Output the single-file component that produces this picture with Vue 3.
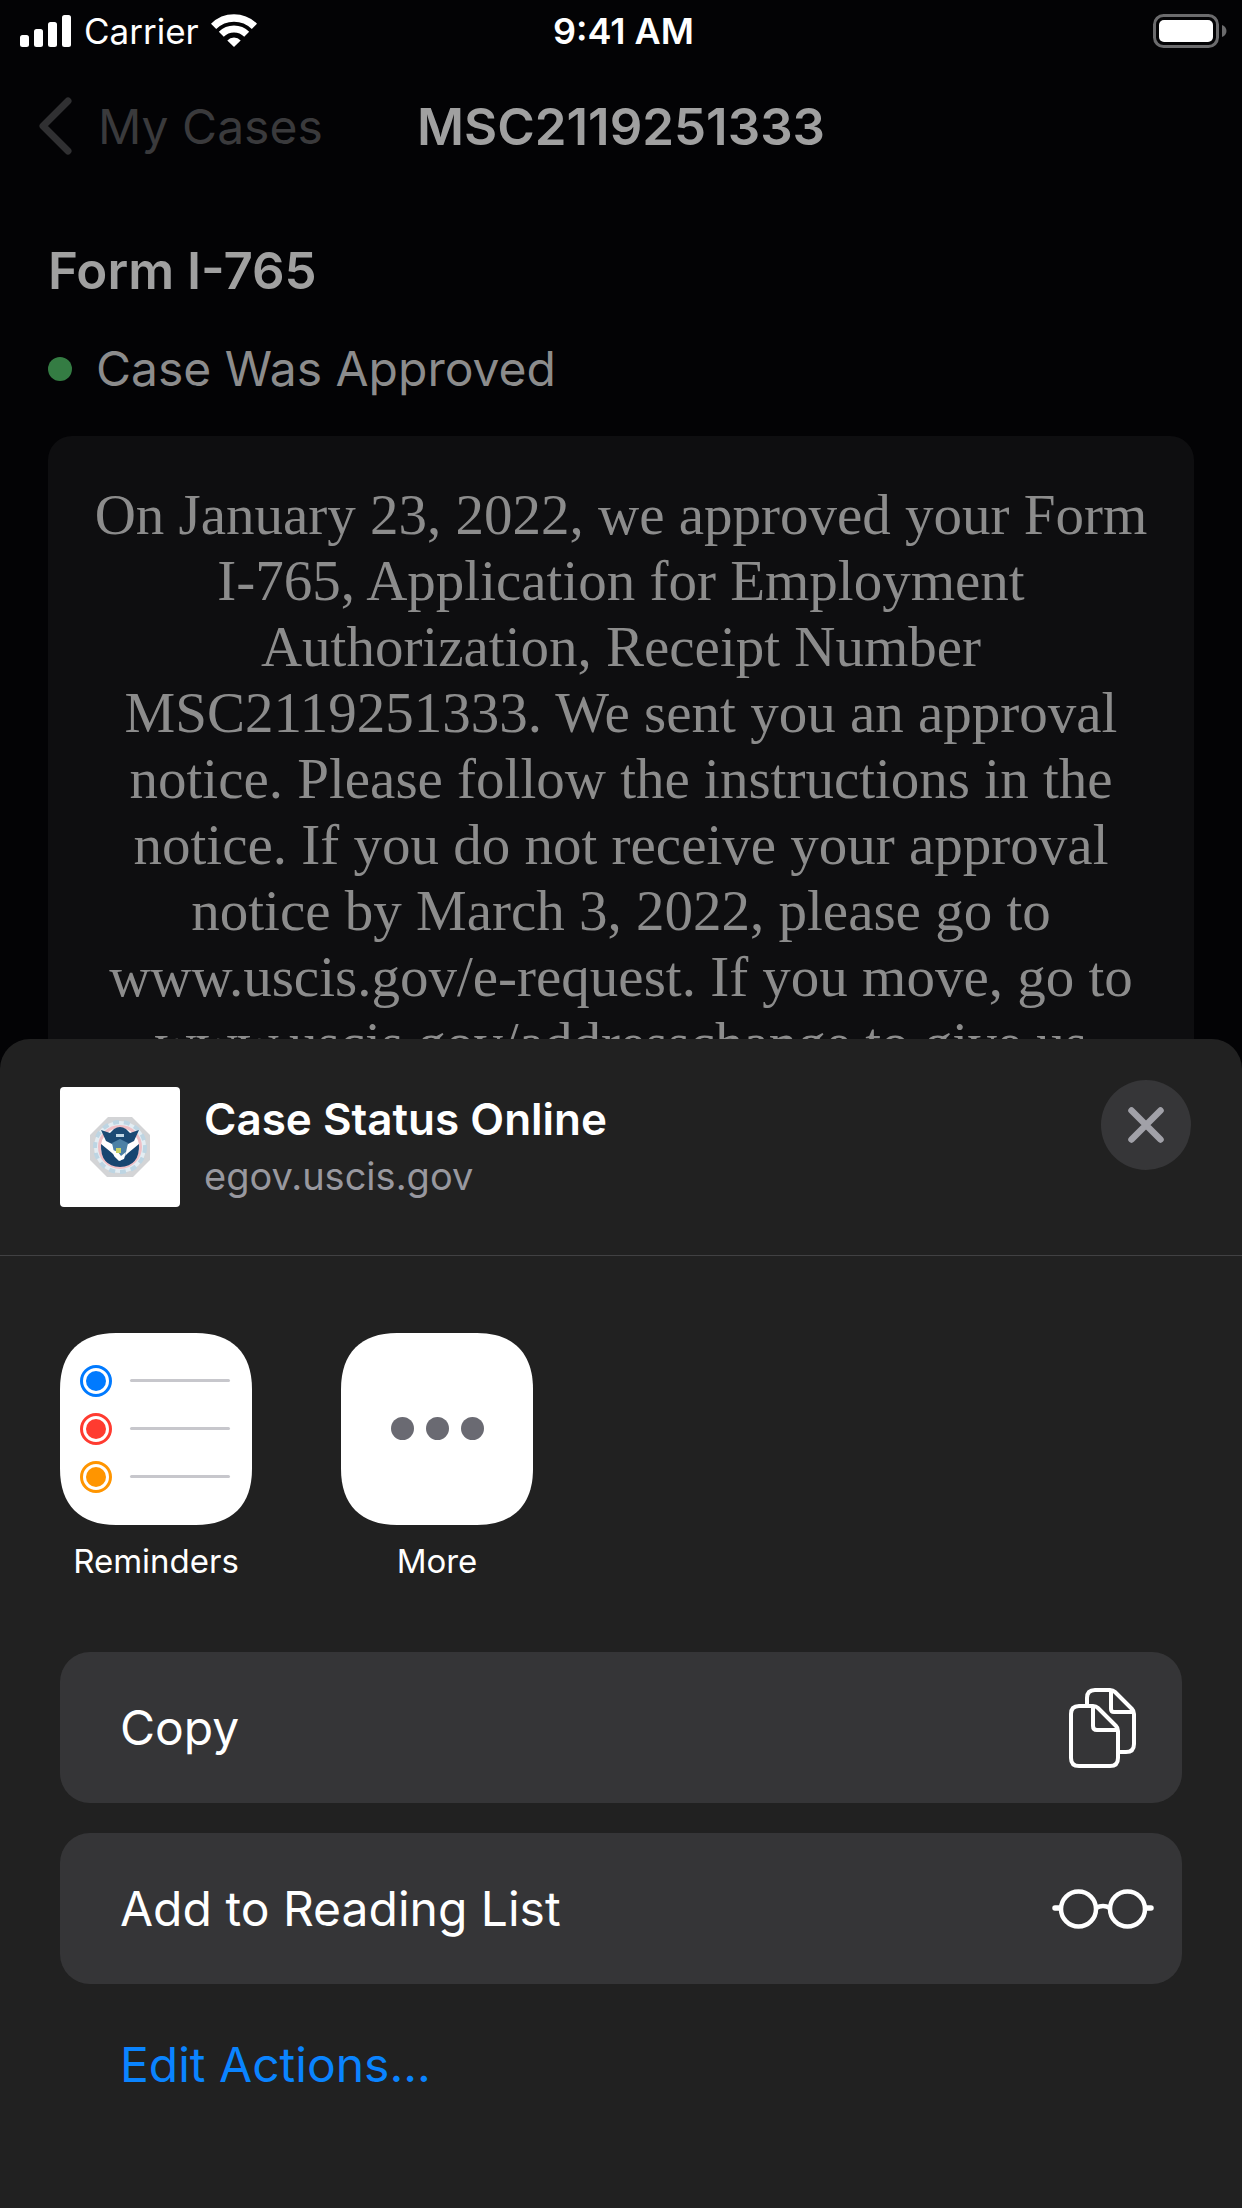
<script setup>
const noticeLines = [
  'On January 23, 2022, we approved your Form',
  'I-765, Application for Employment',
  'Authorization, Receipt Number',
  'MSC2119251333. We sent you an approval',
  'notice. Please follow the instructions in the',
  'notice. If you do not receive your approval',
  'notice by March 3, 2022, please go to',
  'www.uscis.gov/e-request. If you move, go to',
  'www.uscis.gov/addresschange to give us',
]

const reminders = [
  { color: '#007aff', y: 48 },
  { color: '#ff3b30', y: 96 },
  { color: '#ff9500', y: 144 },
]
</script>

<template>
  <div class="app">
    <div class="screen">
      <div class="status-bar">
        <div class="status-left">
          <svg class="signal" width="52" height="34" viewBox="0 0 52 34" fill="#fff" aria-hidden="true">
            <rect x="0" y="21" width="9" height="12" rx="2.5" />
            <rect x="14" y="15" width="9" height="18" rx="2.5" />
            <rect x="28" y="8" width="9" height="25" rx="2.5" />
            <rect x="42" y="1" width="9" height="32" rx="2.5" />
          </svg>
          <span>Carrier</span>
          <svg width="46" height="34" viewBox="0 0 46 34" fill="none" stroke="#fff" aria-hidden="true">
            <path d="M2.6 12.4A29 29 0 0 1 43.4 12.4" stroke-width="7.4" />
            <path d="M10.3 20.2A18 18 0 0 1 35.7 20.2" stroke-width="7" />
            <path d="M16.3 26.4A9.4 9.4 0 0 1 29.7 26.4L23 33Z" fill="#fff" stroke="none" />
          </svg>
        </div>
        <span class="clock">9:41 AM</span>
        <div class="status-right">
          <svg width="74" height="34" viewBox="0 0 74 34" aria-hidden="true">
            <rect x="1.5" y="1.5" width="63" height="31" rx="9" fill="none" stroke="#6b6b6d" stroke-width="3" />
            <rect x="6" y="6" width="54" height="22" rx="5" fill="#fff" />
            <path d="M69 11c3 1 4.500 3.500 4.500 6s-1.500 5-4.500 6z" fill="#6b6b6d" />
          </svg>
        </div>
      </div>

      <header class="nav">
        <button class="back" type="button">
          <svg width="36" height="60" viewBox="0 0 36 60" fill="none" stroke="#303032" stroke-width="7" stroke-linecap="round" stroke-linejoin="round" aria-hidden="true">
            <path d="M29 5L4 30L29 55" />
          </svg>
          <span>My Cases</span>
        </button>
        <h1>MSC2119251333</h1>
      </header>

      <main class="case">
        <h2>Form I-765</h2>
        <p class="case-status"><span class="dot"></span>Case Was Approved</p>
        <p class="notice">
          <template v-for="line in noticeLines" :key="line">{{ line }}<br /></template>
        </p>
      </main>
    </div>

    <section class="sheet" aria-label="Share">
      <div class="sheet-header">
        <svg class="thumb" width="120" height="120" viewBox="0 0 120 120" aria-hidden="true">
          <rect width="120" height="120" rx="4" fill="#fff" />
          <path d="M48 30H72L90 48V73L73 90H47L30 73V48Z" fill="#d3d4d6" />
          <circle cx="60" cy="60" r="26" fill="#e3edf3" />
          <circle cx="60" cy="60" r="25" fill="none" stroke="#bdd5e3" stroke-width="4" stroke-dasharray="6 5" />
          <circle cx="60" cy="60" r="20.500" fill="#fff" stroke="#efc0c6" stroke-width="3" />
          <path d="M41 43L50 46L54 42Q60 38 66 42L70 46L79 43L74 54L66 58L60 63L54 58L46 54Z" fill="#1c4a74" />
          <path d="M41 57L52 66L60 74L68 66L79 57Q80 79 60 80Q40 79 41 57Z" fill="#174570" />
          <path d="M52 56L60 52L68 56L65 70L60 74L55 70Z" fill="#4d81a5" />
          <path d="M56 47H64V50H56Z" fill="#c3d8e6" />
          <path d="M53 63L58 65L61 69L66 65L64 72L59 74L54 69Z" fill="#fff" />
          <path d="M56 61H61V66H56Z" fill="#c9d268" />
        </svg>
        <div class="sheet-titles">
          <h2>Case Status Online</h2>
          <p>egov.uscis.gov</p>
        </div>
        <button class="close" type="button" aria-label="Close">
          <svg width="36" height="36" viewBox="0 0 36 36" stroke="#a1a1a8" stroke-width="6.500" stroke-linecap="round" aria-hidden="true">
            <path d="M3.500 3.500L32.500 32.500M32.500 3.500L3.500 32.500" />
          </svg>
        </button>
      </div>

      <div class="apps">
        <button class="app-item" type="button">
          <svg width="192" height="192" viewBox="0 0 192 192" aria-hidden="true">
            <path class="tile" d="M56 0H136C172 0 192 20 192 56V136C192 172 172 192 136 192H56C20 192 0 172 0 136V56C0 20 20 0 56 0Z" />
            <g v-for="r in reminders" :key="r.color">
              <circle cx="36" :cy="r.y" r="14.500" fill="none" :stroke="r.color" stroke-width="3" />
              <circle cx="36" :cy="r.y" r="10" :fill="r.color" />
              <rect x="70" :y="r.y - 2" width="100" height="3" rx="1.500" fill="#c7c7cc" />
            </g>
          </svg>
          <span>Reminders</span>
        </button>
        <button class="app-item" type="button">
          <svg width="192" height="192" viewBox="0 0 192 192" aria-hidden="true">
            <path class="tile" d="M56 0H136C172 0 192 20 192 56V136C192 172 172 192 136 192H56C20 192 0 172 0 136V56C0 20 20 0 56 0Z" />
            <g fill="#6a6a72">
              <circle cx="61.500" cy="95.500" r="11.500" />
              <circle cx="96.500" cy="95.500" r="11.500" />
              <circle cx="131.500" cy="95.500" r="11.500" />
            </g>
          </svg>
          <span>More</span>
        </button>
      </div>

      <div class="actions">
        <button class="action" type="button">
          <span>Copy</span>
          <svg width="102" height="82" viewBox="0 0 102 82" fill="none" stroke="#fff" stroke-width="4" stroke-linejoin="round" aria-hidden="true">
            <path d="M35 17V11Q35 3 43 3H58Q61 3 63 5L80 22Q82 24 82 27V57Q82 65 74 65H67" />
            <path d="M59 4V22Q59 25 62 25H81" />
            <path d="M27 19H41Q44 19 46 21L64 39Q66 41 66 44V71Q66 79 58 79H27Q19 79 19 71V27Q19 19 27 19Z" />
            <path d="M41 20V39Q41 43 45 43H65" />
          </svg>
        </button>
        <button class="action" type="button">
          <span>Add to Reading List</span>
          <svg width="102" height="42" viewBox="0 0 102 42" fill="none" stroke="#fff" aria-hidden="true">
            <circle cx="26.500" cy="21" r="17.500" stroke-width="4.500" />
            <circle cx="75.500" cy="21" r="17.500" stroke-width="4.500" />
            <path d="M44 20Q51 16 58 20" stroke-width="4.500" />
            <path d="M3 20H8M94 20H99" stroke-width="5.500" stroke-linecap="round" />
          </svg>
        </button>
        <button class="edit" type="button">Edit Actions...</button>
      </div>
    </section>
  </div>
</template>

<style>
body {
  margin: 0;
  background: #030305;
}
</style>

<style scoped>
.app {
  display: flex;
  flex-direction: column;
  height: 100vh;
  background: #030305;
  color: #fff;
  font-family: Inter, "Liberation Sans", sans-serif;
  font-size: 48px;
}

h1,
h2,
p {
  margin: 0;
  font-size: inherit;
  font-weight: inherit;
}

svg {
  display: block;
  flex: none;
}

button {
  padding: 0;
  border: 0;
  background: none;
  color: inherit;
  font: inherit;
  text-align: left;
}

.screen {
  flex: 1 1 0;
  min-height: 0;
  overflow: hidden;
}

.status-bar {
  display: grid;
  grid-template-columns: 1fr auto 1fr;
  align-items: center;
  height: 60px;
  padding: 0 15px 0 20px;
  font-size: 35px;
  line-height: 62px;
}

.status-left {
  display: flex;
  align-items: center;
  gap: 12px;
}

.clock {
  font-size: 36px;
  font-weight: 600;
}

.status-right {
  display: flex;
  justify-content: flex-end;
}

.nav {
  display: grid;
  grid-template-columns: 1fr auto 1fr;
  align-items: center;
  height: 132px;
  padding: 0 39px;
}

.nav h1 {
  color: #a0a0a0;
  font-size: 51px;
  font-weight: 600;
}

.back {
  display: flex;
  align-items: center;
  gap: 23px;
  color: #3a3a3c;
}

.case {
  padding: 48px 48px 0;
}

.case h2 {
  color: #a0a0a0;
  font-size: 51px;
  font-weight: 600;
  line-height: 62px;
}

.case-status {
  display: flex;
  align-items: center;
  gap: 24px;
  margin: 36px 0;
  color: #8c8c8c;
  line-height: 62px;
}

.dot {
  width: 24px;
  height: 24px;
  border-radius: 50%;
  background: #347c43;
}

.notice {
  padding: 46px 0;
  border-radius: 24px;
  background: #0e0e10;
  color: #8c8c8c;
  font-family: "Liberation Serif", serif;
  font-size: 57px;
  line-height: 66px;
  text-align: center;
  white-space: nowrap;
}

.sheet {
  flex: none;
  border-radius: 30px 30px 0 0;
  background: #212121;
}

.sheet-header {
  display: flex;
  align-items: flex-start;
  padding: 48px 51px 48px 60px;
  border-bottom: 1px solid #414143;
}

.sheet-titles {
  flex: 1;
  margin-left: 24px;
  padding-top: 4px;
}

.sheet-titles h2 {
  font-size: 44px;
  font-weight: 600;
  line-height: 56px;
}

.sheet-titles p {
  color: #98989f;
  font-size: 38px;
  line-height: 58px;
}

.close {
  display: flex;
  align-items: center;
  justify-content: center;
  width: 90px;
  height: 90px;
  margin-top: -7px;
  border-radius: 50%;
  background: #363638;
}

.apps {
  display: flex;
  gap: 89px;
  padding: 77px 60px 69px;
}

.app-item {
  display: flex;
  flex-direction: column;
  align-items: center;
  gap: 14px;
  font-size: 33px;
  line-height: 44px;
}

.tile {
  fill: #fff;
}

.actions {
  display: flex;
  flex-direction: column;
  gap: 30px;
  padding: 0 60px 92px;
}

.action {
  display: flex;
  align-items: center;
  justify-content: space-between;
  height: 151px;
  padding: 0 28px 0 60px;
  border-radius: 30px;
  background: #353537;
}

.edit {
  align-self: flex-start;
  padding: 20px 60px;
  color: #0a84ff;
  line-height: 62px;
}
</style>
